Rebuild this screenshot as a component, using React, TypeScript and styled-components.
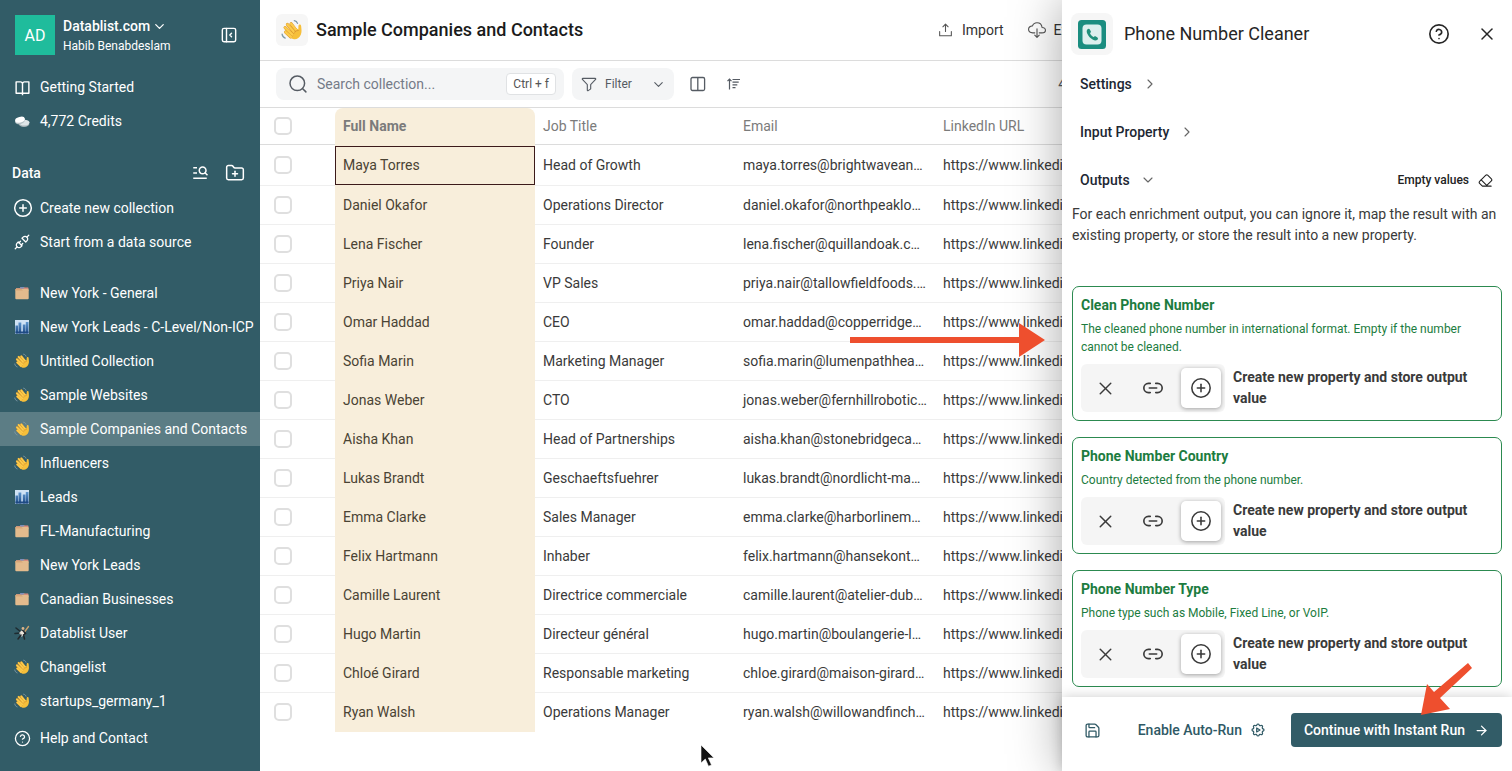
import React from 'react';
import styled, { createGlobalStyle, css } from 'styled-components';
import {
  ArrowRight,
  ChevronDown,
  ChevronRight,
  CircleHelp,
  CirclePlus,
  Eraser,
  FolderPlus,
  Link2,
  Save,
  X,
} from 'lucide-react';
import { RiBookOpenLine, RiMenuSearchLine } from 'react-icons/ri';
import { TbLayoutSidebarLeftCollapse, TbPlugConnected, TbSettingsAutomation } from 'react-icons/tb';
import { PiUploadSimple, PiFunnel } from 'react-icons/pi';
import { IoCloudDownloadOutline } from 'react-icons/io5';

const GlobalStyle = createGlobalStyle`
  *, *::before, *::after { box-sizing: border-box; }
  body {
    margin: 0;
    font-family: Roboto, "Liberation Sans", sans-serif;
    font-size: 14px;
    line-height: 21px;
    color: #3a3a3a;
    background: #fff;
  }
  button, input { font: inherit; color: inherit; }
  button { border: 0; padding: 0; background: none; cursor: pointer; }
  a { color: inherit; text-decoration: none; }
  h1, h2, h3, p { margin: 0; }
  svg { display: block; flex: none; }
`;

const Page = styled.div`
  position: relative;
  display: flex;
  height: 100vh;
  overflow: hidden;
`;

/* ---------- Sidebar ---------- */

const Sidebar = styled.aside`
  display: flex;
  flex-direction: column;
  flex: none;
  width: 260px;
  background: #325c67;
  color: #fff;
  padding: 15px 0 16px;
`;

const Account = styled.div`
  display: flex;
  align-items: center;
  gap: 8px;
  padding: 0 21px 0 15px;
  margin-bottom: 15px;
`;

const Avatar = styled.div`
  display: grid;
  place-items: center;
  width: 40px;
  height: 40px;
  background: #1fbc9c;
  font-size: 16px;
`;

const AccountText = styled.div`
  flex: 1;
  display: flex;
  flex-direction: column;
`;

const AccountName = styled.button`
  display: flex;
  align-items: center;
  gap: 2px;
  font-weight: 500;
`;

const AccountUser = styled.span`
  font-size: 12px;
  line-height: 18px;
`;

const IconButton = styled.button`
  display: grid;
  place-items: center;
`;

const Nav = styled.nav`
  display: flex;
  flex-direction: column;
`;

const NavItem = styled.a<{ $active?: boolean }>`
  display: flex;
  align-items: center;
  gap: 9px;
  flex: none;
  height: 34px;
  padding-left: 13px;
  white-space: nowrap;
  background: ${(p) => (p.$active ? '#5c7d85' : 'transparent')};
`;

const NavIcon = styled.span`
  display: grid;
  place-items: center;
  width: 18px;
  flex: none;
`;

const DataHeading = styled.div`
  display: flex;
  align-items: center;
  gap: 16px;
  height: 36px;
  margin-top: 17px;
  padding: 0 15px 0 12px;
`;

const DataTitle = styled.h2`
  flex: 1;
  font-size: 14px;
  font-weight: 500;
`;

const Collections = styled(Nav)`
  flex: 1;
  min-height: 0;
  margin-top: 17px;
  overflow: hidden;
`;

/* ---------- Main area ---------- */

const panelWidth = 450;

const Main = styled.main`
  flex: 1;
  min-width: 0;
  margin-right: ${panelWidth}px;
  overflow: hidden;
`;

const TitleBar = styled.header`
  display: flex;
  align-items: center;
  gap: 8px;
  height: 61px;
  padding-left: 16px;
  border-bottom: 1px solid #dcdcdc;
`;

const EmojiTile = styled.div`
  display: grid;
  place-items: center;
  width: 32px;
  height: 32px;
  border-radius: 6px;
  background: #f6f6f6;
`;

const Title = styled.h1`
  flex: 1;
  font-size: 18px;
  font-weight: 500;
  line-height: 24px;
  color: #1b1b1b;
`;

const Actions = styled.div`
  display: flex;
  gap: 24px;
  margin-right: -32px;
`;

const Action = styled.button`
  display: flex;
  align-items: center;
  gap: 8px;
  color: #333;
  svg { color: #555; }
`;

const Toolbar = styled.div`
  display: flex;
  align-items: center;
  height: 47px;
  padding-left: 16px;
  border-bottom: 1px solid #dcdcdc;
  color: #555b63;
`;

const SearchBox = styled.label`
  display: flex;
  align-items: center;
  gap: 9px;
  width: 288px;
  height: 32px;
  padding: 0 8px 0 12px;
  border-radius: 8px;
  background: #f4f5f6;
`;

const SearchInput = styled.input`
  flex: 1;
  min-width: 0;
  border: 0;
  padding: 0;
  outline: 0;
  background: none;
  &::placeholder { color: #747b88; opacity: 1; }
`;

const Kbd = styled.kbd`
  height: 22px;
  padding: 0 6px;
  border: 1px solid #e0e2e4;
  border-radius: 4px;
  background: #fff;
  font-family: inherit;
  font-size: 12px;
  line-height: 20px;
  color: #555;
`;

const FilterButton = styled.button`
  display: flex;
  align-items: center;
  gap: 7px;
  width: 102px;
  height: 32px;
  margin: 0 16px 0 8px;
  padding: 0 8px;
  border-radius: 8px;
  background: #f4f5f6;
  font-size: 12px;
  svg:last-child { margin-left: auto; }
`;

const ToolIcons = styled.div`
  display: flex;
  gap: 20px;
`;

const ItemCount = styled.span`
  margin: 0 -4px 0 auto;
`;

/* ---------- Table ---------- */

const Table = styled.table`
  width: 100%;
  table-layout: fixed;
  border-collapse: separate;
  border-spacing: 0;
`;

const highlight = css`
  background: #f8eedb;
`;

const HeadCell = styled.th<{ $selected?: boolean }>`
  height: 37px;
  padding: 0 8px;
  border-bottom: 1px solid #dcdcdc;
  text-align: left;
  font-weight: ${(p) => (p.$selected ? 700 : 400)};
  color: #7b7b7b;
  ${(p) => p.$selected && css`
    ${highlight}
    border-bottom-color: #f8eedb;
    border-radius: 8px 8px 0 0;
  `}
`;

const Cell = styled.td<{ $selected?: boolean; $focused?: boolean }>`
  height: 39px;
  padding: 0 8px;
  border-bottom: 1px solid #efefef;
  overflow: hidden;
  white-space: nowrap;
  ${(p) => p.$selected && css`
    ${highlight}
    color: #4a4334;
    border-bottom-color: #f8eedb;
  `}
  ${(p) => p.$focused && css`
    padding: 0;
  `}
`;

const UrlCell = styled(Cell)`
  padding-right: 0;
`;

const FocusRing = styled.div`
  height: 39px;
  margin-top: 1px;
  padding: 0 7px;
  border: 1px solid #3c1a1a;
  line-height: 37px;
`;

const Row = styled.tr<{ $focused?: boolean }>`
  ${(p) => p.$focused && css`${Cell} { height: 41px; }`}
  &:last-child ${Cell} { border-bottom-color: transparent; }
`;

const Check = styled.input`
  appearance: none;
  display: block;
  width: 18px;
  height: 18px;
  margin: 0 6px;
  border: 2px solid #dfdfdf;
  border-radius: 5px;
  background: #fff;
`;

/* ---------- Slide-over panel ---------- */

const Panel = styled.section`
  position: absolute;
  inset: 0 0 0 auto;
  display: flex;
  flex-direction: column;
  width: ${panelWidth}px;
  background: #fff;
  box-shadow: 0 0 48px rgba(0, 0, 0, 0.35);
`;

const PanelHeader = styled.header`
  display: flex;
  align-items: center;
  gap: 11px;
  height: 60px;
  padding: 8px 15px 0 9px;
  color: #262626;
`;

const AppTile = styled.div`
  display: grid;
  place-items: center;
  width: 42px;
  height: 42px;
  border-radius: 8px;
  background: #f6f6f6;
`;

const PanelTitle = styled.h2`
  flex: 1;
  font-size: 18px;
  font-weight: 400;
  line-height: 24px;
`;

const PanelActions = styled.div`
  display: flex;
  align-items: center;
  gap: 27px;
`;

const PanelBody = styled.div`
  flex: 1;
  min-height: 0;
  padding: 0 10px;
  overflow: hidden;
`;

const SectionRow = styled.div`
  display: flex;
  align-items: center;
  justify-content: space-between;
  height: 48px;
  padding: 0 9px 0 8px;
`;

const SectionToggle = styled.button`
  display: flex;
  align-items: center;
  gap: 10px;
  font-weight: 500;
  color: #1d2733;
  svg { color: #666; }
`;

const EmptyValues = styled.button`
  display: flex;
  align-items: center;
  gap: 9px;
  font-size: 12px;
  font-weight: 500;
  color: #222;
`;

const Intro = styled.p`
  margin-bottom: 40px;
`;

const Card = styled.article`
  margin-bottom: 16px;
  padding: 8px;
  border: 1px solid #2c8a50;
  border-radius: 7px;
`;

const CardTitle = styled.h3`
  font-size: 14px;
  font-weight: 700;
  line-height: 21px;
  color: #1c7c40;
`;

const CardText = styled.p`
  margin: 4px 0 8px;
  font-size: 12px;
  line-height: 18px;
  color: #1c7c40;
`;

const CardChoice = styled.div`
  display: flex;
  align-items: center;
  gap: 8px;
  font-weight: 700;
`;

const Segments = styled.div`
  display: flex;
  flex: none;
  gap: 8px;
  padding: 4px;
  border-radius: 6px;
  background: #f5f5f5;
`;

const Segment = styled.button<{ $on?: boolean }>`
  display: grid;
  place-items: center;
  width: 40px;
  height: 40px;
  border-radius: 5px;
  ${(p) => p.$on && css`
    background: #fff;
    box-shadow: 0 1px 4px rgba(0, 0, 0, 0.35);
  `}
`;

const PanelFooter = styled.footer`
  position: relative;
  display: flex;
  align-items: center;
  height: 74px;
  padding: 0 10px 8px 22px;
  background: #fff;
  box-shadow: 0 0 12px rgba(0, 0, 0, 0.2);
  color: #2f5965;
`;

const AutoRun = styled.button`
  display: flex;
  align-items: center;
  gap: 8px;
  margin: 0 25px 0 auto;
  font-weight: 500;
`;

const RunButton = styled.button`
  display: flex;
  align-items: center;
  gap: 9px;
  height: 34px;
  padding: 0 13px;
  border-radius: 4px;
  background: #325c67;
  color: #fff;
  font-weight: 500;
`;

/* ---------- Annotations over the page ---------- */

const Annotation = styled.svg<{ $right: number; $bottom: number }>`
  position: absolute;
  right: ${(p) => p.$right}px;
  bottom: ${(p) => p.$bottom}px;
  pointer-events: none;
`;

/* ---------- Drawings ---------- */

const Wave = ({ size = 16 }: { size?: number }) => (
  <svg width={size} height={size} viewBox="0 0 24 24" fill="none" strokeLinecap="round" aria-hidden="true">
    <path d="M9.5 13.5l5-4.5 4.4 2.4c.3-2.4-.3-4.1.7-5 1-.8 2.3-.1 2.4 1.4.2 2.9 1 5.6-.3 9.2-1.3 3.5-4.2 5.4-7.2 5.2-2.1-.1-3.500-1.200-4.700-2.500z" fill="#f6bf3a" />
    <g stroke="#d9952a" strokeWidth="3.4">
      <path d="M10.5 19.5L5 14.2M12 17L4.5 9.5M14 14.5L7 6M16.5 12.5L11 5.2" />
    </g>
    <g stroke="#fccb4b" strokeWidth="2.6">
      <path d="M10.8 19.5L5 14.2M12.5 17L4.500 9.500M14.500 14.500L7 6M17 12.500L11 5.200" />
    </g>
    <path d="M14.5 14.5c1.3-1.5 2.8-2.1 4.3-2" stroke="#d9952a" strokeWidth="1" />
    <path d="M14.5 1.8c1.8.4 3 1.5 3.5 3M1.200 16.500c.2 2 1.400 3.600 3.400 4.300" stroke="#7f9aa8" strokeWidth="1.4" />
  </svg>
);

const Folder = () => (
  <svg width="16" height="16" viewBox="0 0 16 16" aria-hidden="true">
    <path d="M2 3h4l1-1h3l1 .8h3.500V6H2z" fill="#c9967c" />
    <path d="M6 2h4l-.5 1.600H6.500z" fill="#7d8fbd" />
    <path d="M10.500 2.600h3.500v1.400h-3.500z" fill="#d98a80" />
    <rect x="1.300" y="4" width="13.400" height="10.200" rx="1" fill="#e3bb8d" />
    <path d="M1.300 5.600V4h6L9 5.600z" fill="#d7a778" />
  </svg>
);

const City = () => (
  <svg width="16" height="16" viewBox="0 0 16 16" aria-hidden="true">
    <defs>
      <linearGradient id="tower" x1="0" y1="0" x2="0" y2="1">
        <stop offset="0" stopColor="#5f98d0" />
        <stop offset="1" stopColor="#1d4a86" />
      </linearGradient>
    </defs>
    <rect x="1" y="1" width="14" height="14" fill="#cfe2f4" />
    <path d="M1.500 6.500H4V14.500H1.500zM4.500 3.500h2.800v11H4.500zM8.800 5.500h2.600v9H8.800zM11.800 3h2.700v11.500h-2.700z" fill="url(#tower)" />
    <path d="M1.500 12.500h13v2h-13z" fill="#1f4a83" />
  </svg>
);

const Fencer = () => (
  <svg width="16" height="16" viewBox="0 0 16 16" fill="none" strokeLinecap="round" aria-hidden="true">
    <path d="M14.500 1.500L10.500 7" stroke="#c9a06b" strokeWidth="1.400" />
    <path d="M2 3l5 4M1 8.500l5-.5" stroke="#1e2b30" strokeWidth="1.600" />
    <path d="M6 7.500l3-2.500 1.500 2-2.500 4z" fill="#efe8dd" stroke="#f5f0e8" />
    <path d="M8.500 5l3 3.500-2 1.500 1 4M7 10l-3 4" stroke="#23282b" strokeWidth="1.500" />
    <circle cx="9" cy="3.500" r="1.400" fill="#dcb48a" />
  </svg>
);

const Coins = () => (
  <svg width="18" height="16" viewBox="0 0 18 16" aria-hidden="true">
    <ellipse cx="11" cy="11" rx="5.300" ry="2.900" fill="#a9b5b9" />
    <ellipse cx="11.300" cy="9.600" rx="5.200" ry="2.900" fill="#dfe6e8" />
    <ellipse cx="7" cy="8" rx="5" ry="3" transform="rotate(-14 7 8)" fill="#b8c3c7" />
    <ellipse cx="7" cy="6.700" rx="5" ry="2.800" transform="rotate(-14 7 6.700)" fill="#fff" />
  </svg>
);

const PhoneApp = () => (
  <svg width="28" height="29" viewBox="0 0 28 29" aria-hidden="true">
    <rect width="28" height="29" rx="3.500" fill="#1b8d80" />
    <rect x="4.500" y="4.500" width="19" height="20" rx="4" fill="#dcefee" />
    <path d="M9.300 9.600c.9-1 1.900-1 2.500-.1l1 1.700c.3.600.1 1.100-.4 1.600-.4.400-.4.800-.1 1.300.7 1.200 1.500 2 2.700 2.700.5.300.9.200 1.300-.2.500-.5 1-.6 1.600-.2l1.500 1.100c.8.700.8 1.500 0 2.200-1.200 1.100-2.800 1-4.800-.1-2.500-1.400-4.300-3.400-5.400-6-.7-1.600-.6-3 .1-4z" fill="#1f8f7b" />
  </svg>
);

const SearchGlyph = () => (
  <svg width="20" height="20" viewBox="0 0 20 20" fill="none" stroke="#555b63" strokeWidth="1.500" strokeLinecap="round" aria-hidden="true">
    <circle cx="9.300" cy="9.300" r="7.300" />
    <path d="M14.700 14.700l3.200 3.200" />
  </svg>
);

const ColumnsGlyph = () => (
  <svg width="16" height="16" viewBox="0 0 16 16" fill="none" stroke="currentColor" strokeWidth="1.300" aria-hidden="true">
    <rect x="1" y="1.500" width="13.600" height="13" rx="1.500" />
    <path d="M7.800 1.500v13" />
  </svg>
);

const SortGlyph = () => (
  <svg width="16" height="16" viewBox="0 0 16 16" fill="none" stroke="currentColor" strokeWidth="1.200" aria-hidden="true">
    <path d="M3.500 13.500V3.200M1.500 5.200l2-2 2 2M6.500 3.500h7.500M6.500 6.200h6.200M6.500 8.900h4.800M6.500 11.600h3" />
  </svg>
);

/* ---------- Data ---------- */

const collections: { name: string; icon: React.ReactNode; active?: boolean }[] = [
  { name: 'New York - General', icon: <Folder /> },
  { name: 'New York Leads - C-Level/Non-ICP', icon: <City /> },
  { name: 'Untitled Collection', icon: <Wave /> },
  { name: 'Sample Websites', icon: <Wave /> },
  { name: 'Sample Companies and Contacts', icon: <Wave />, active: true },
  { name: 'Influencers', icon: <Wave /> },
  { name: 'Leads', icon: <City /> },
  { name: 'FL-Manufacturing', icon: <Folder /> },
  { name: 'New York Leads', icon: <Folder /> },
  { name: 'Canadian Businesses', icon: <Folder /> },
  { name: 'Datablist User', icon: <Fencer /> },
  { name: 'Changelist', icon: <Wave /> },
  { name: 'startups_germany_1', icon: <Wave /> },
];

const contacts = [
  ['Maya Torres', 'Head of Growth', 'maya.torres@brightwavean…'],
  ['Daniel Okafor', 'Operations Director', 'daniel.okafor@northpeaklo…'],
  ['Lena Fischer', 'Founder', 'lena.fischer@quillandoak.c…'],
  ['Priya Nair', 'VP Sales', 'priya.nair@tallowfieldfoods.…'],
  ['Omar Haddad', 'CEO', 'omar.haddad@copperridge…'],
  ['Sofia Marin', 'Marketing Manager', 'sofia.marin@lumenpathhea…'],
  ['Jonas Weber', 'CTO', 'jonas.weber@fernhillrobotic…'],
  ['Aisha Khan', 'Head of Partnerships', 'aisha.khan@stonebridgeca…'],
  ['Lukas Brandt', 'Geschaeftsfuehrer', 'lukas.brandt@nordlicht-ma…'],
  ['Emma Clarke', 'Sales Manager', 'emma.clarke@harborlinem…'],
  ['Felix Hartmann', 'Inhaber', 'felix.hartmann@hansekont…'],
  ['Camille Laurent', 'Directrice commerciale', 'camille.laurent@atelier-dub…'],
  ['Hugo Martin', 'Directeur général', 'hugo.martin@boulangerie-l…'],
  ['Chloé Girard', 'Responsable marketing', 'chloe.girard@maison-girard…'],
  ['Ryan Walsh', 'Operations Manager', 'ryan.walsh@willowandfinch…'],
];

const outputs = [
  {
    name: 'Clean Phone Number',
    text: 'The cleaned phone number in international format. Empty if the number cannot be cleaned.',
  },
  { name: 'Phone Number Country', text: 'Country detected from the phone number.' },
  { name: 'Phone Number Type', text: 'Phone type such as Mobile, Fixed Line, or VoIP.' },
];

export default function App() {
  return (
    <>
      <GlobalStyle />
      <Page>
        <Sidebar>
          <Account>
            <Avatar>AD</Avatar>
            <AccountText>
              <AccountName>
                Datablist.com <ChevronDown size={15} />
              </AccountName>
              <AccountUser>Habib Benabdeslam</AccountUser>
            </AccountText>
            <IconButton aria-label="Collapse sidebar">
              <TbLayoutSidebarLeftCollapse size={20} strokeWidth={1.7} />
            </IconButton>
          </Account>
          <Nav>
            <NavItem href="#start">
              <NavIcon><RiBookOpenLine size={17} /></NavIcon>
              Getting Started
            </NavItem>
            <NavItem href="#credits">
              <NavIcon><Coins /></NavIcon>
              4,772 Credits
            </NavItem>
          </Nav>
          <DataHeading>
            <DataTitle>Data</DataTitle>
            <IconButton aria-label="Search collections"><RiMenuSearchLine size={18} /></IconButton>
            <IconButton aria-label="New folder"><FolderPlus size={20} strokeWidth={1.8} /></IconButton>
          </DataHeading>
          <Nav>
            <NavItem href="#new">
              <NavIcon><CirclePlus size={20} strokeWidth={1.8} /></NavIcon>
              Create new collection
            </NavItem>
            <NavItem href="#source">
              <NavIcon><TbPlugConnected size={18} strokeWidth={1.7} /></NavIcon>
              Start from a data source
            </NavItem>
          </Nav>
          <Collections>
            {collections.map((c) => (
              <NavItem key={c.name} href="#collection" $active={c.active}>
                <NavIcon>{c.icon}</NavIcon>
                {c.name}
              </NavItem>
            ))}
          </Collections>
          <NavItem href="#help">
            <NavIcon><CircleHelp size={17} strokeWidth={1.8} /></NavIcon>
            Help and Contact
          </NavItem>
        </Sidebar>

        <Main>
          <TitleBar>
            <EmojiTile><Wave size={22} /></EmojiTile>
            <Title>Sample Companies and Contacts</Title>
            <Actions>
              <Action><PiUploadSimple size={17} />Import</Action>
              <Action><IoCloudDownloadOutline size={18} />Export</Action>
            </Actions>
          </TitleBar>
          <Toolbar>
            <SearchBox>
              <SearchGlyph />
              <SearchInput type="text" placeholder="Search collection..." aria-label="Search collection" />
              <Kbd>Ctrl + f</Kbd>
            </SearchBox>
            <FilterButton>
              <PiFunnel size={18} />
              Filter
              <ChevronDown size={15} strokeWidth={1.7} />
            </FilterButton>
            <ToolIcons>
              <IconButton aria-label="Columns"><ColumnsGlyph /></IconButton>
              <IconButton aria-label="Sort"><SortGlyph /></IconButton>
            </ToolIcons>
            <ItemCount>4</ItemCount>
          </Toolbar>
          <Table>
            <colgroup>
              <col style={{ width: 75 }} />
              <col style={{ width: 200 }} />
              <col style={{ width: 200 }} />
              <col style={{ width: 200 }} />
              <col />
            </colgroup>
            <thead>
              <tr>
                <HeadCell><Check type="checkbox" aria-label="Select all" /></HeadCell>
                <HeadCell $selected>Full Name</HeadCell>
                <HeadCell>Job Title</HeadCell>
                <HeadCell>Email</HeadCell>
                <HeadCell>LinkedIn URL</HeadCell>
              </tr>
            </thead>
            <tbody>
              {contacts.map(([name, job, email], i) => (
                <Row key={name} $focused={i === 0}>
                  <Cell><Check type="checkbox" aria-label={`Select ${name}`} /></Cell>
                  <Cell $selected $focused={i === 0}>
                    {i === 0 ? <FocusRing>{name}</FocusRing> : name}
                  </Cell>
                  <Cell>{job}</Cell>
                  <Cell>{email}</Cell>
                  <UrlCell>https://www.linkedin</UrlCell>
                </Row>
              ))}
            </tbody>
          </Table>
        </Main>

        <Panel>
          <PanelHeader>
            <AppTile><PhoneApp /></AppTile>
            <PanelTitle>Phone Number Cleaner</PanelTitle>
            <PanelActions>
              <IconButton aria-label="Help"><CircleHelp size={22} strokeWidth={1.8} /></IconButton>
              <IconButton aria-label="Close"><X size={20} strokeWidth={1.8} /></IconButton>
            </PanelActions>
          </PanelHeader>
          <PanelBody>
            <SectionRow>
              <SectionToggle>Settings <ChevronRight size={16} strokeWidth={1.7} /></SectionToggle>
            </SectionRow>
            <SectionRow>
              <SectionToggle>Input Property <ChevronRight size={16} strokeWidth={1.7} /></SectionToggle>
            </SectionRow>
            <SectionRow>
              <SectionToggle>Outputs <ChevronDown size={16} strokeWidth={1.7} /></SectionToggle>
              <EmptyValues>Empty values <Eraser size={15} strokeWidth={1.7} /></EmptyValues>
            </SectionRow>
            <Intro>
              For each enrichment output, you can ignore it, map the result with an existing property, or
              store the result into a new property.
            </Intro>
            {outputs.map((o) => (
              <Card key={o.name}>
                <CardTitle>{o.name}</CardTitle>
                <CardText>{o.text}</CardText>
                <CardChoice>
                  <Segments>
                    <Segment aria-label="Ignore"><X size={21} strokeWidth={1.7} /></Segment>
                    <Segment aria-label="Map to property"><Link2 size={22} strokeWidth={1.8} /></Segment>
                    <Segment aria-label="Create property" $on><CirclePlus size={22} strokeWidth={1.7} /></Segment>
                  </Segments>
                  <span>Create new property and store output value</span>
                </CardChoice>
              </Card>
            ))}
          </PanelBody>
          <PanelFooter>
            <IconButton aria-label="Save"><Save size={17} strokeWidth={1.8} /></IconButton>
            <AutoRun>Enable Auto-Run <TbSettingsAutomation size={16} strokeWidth={1.8} /></AutoRun>
            <RunButton>Continue with Instant Run <ArrowRight size={15} /></RunButton>
          </PanelFooter>
        </Panel>

        <Annotation $right={467} $bottom={414} width="195" height="34" viewBox="0 0 195 34">
          <path d="M0 14h169V0l26 17-26 17V20H0z" fill="#ee4f2e" />
        </Annotation>
        <Annotation $right={38} $bottom={55} width="54" height="54" viewBox="0 0 54 54">
          <path d="M1 53L7 22l7 8L48 1l4 5-32 30 10 11z" fill="#ee4f2e" />
        </Annotation>
        <Annotation $right={796} $bottom={3} width="16" height="24" viewBox="0 0 16 24">
          <path d="M1 1v18l4.300-4 3.200 7.200 3-1.300-3.200-7H14z" fill="#111" stroke="#fff" strokeWidth=".6" />
        </Annotation>
      </Page>
    </>
  );
}
